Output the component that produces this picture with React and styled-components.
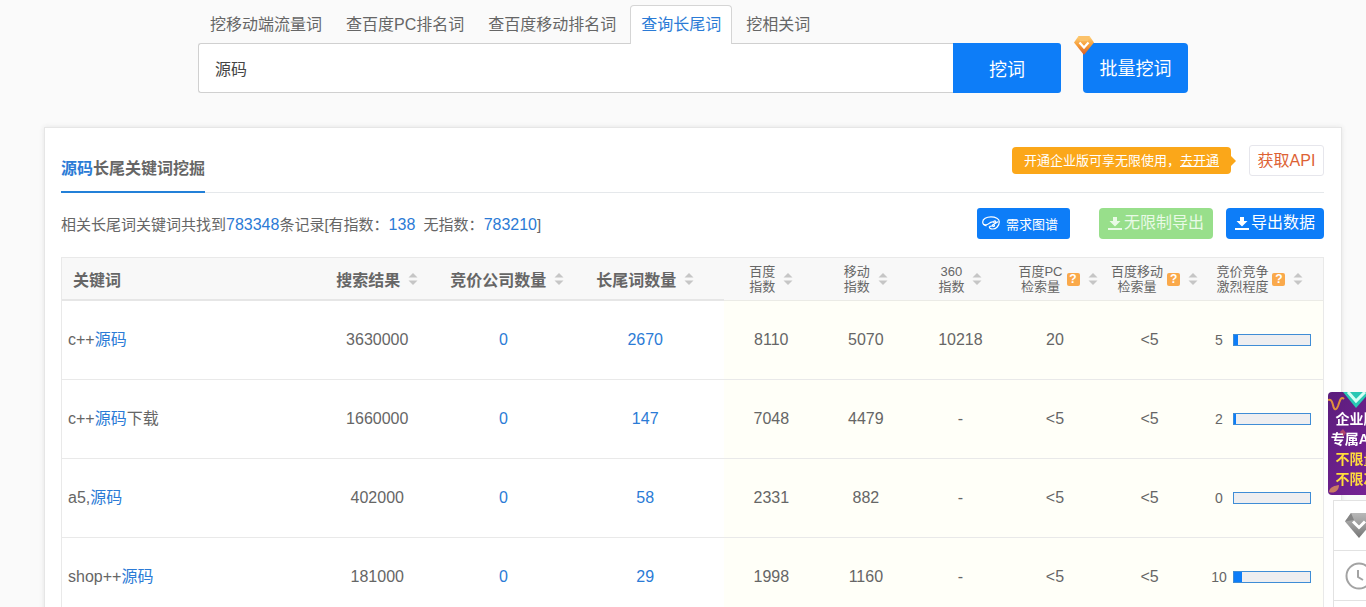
import * as React from "react";
import styled, { createGlobalStyle } from "styled-components";

const tabs = ["挖移动端流量词", "查百度PC排名词", "查百度移动排名词", "查询长尾词", "挖相关词"];

const counts = [
  { name: "搜索结果" },
  { name: "竞价公司数量", shift: 8 },
  { name: "长尾词数量" },
];

const metrics = [
  { lines: ["百度", "指数"] },
  { lines: ["移动", "指数"] },
  { lines: ["360", "指数"] },
  { lines: ["百度PC", "检索量"], help: true, shift: 6 },
  { lines: ["百度移动", "检索量"], help: true, shift: 10 },
  { lines: ["竞价竞争", "激烈程度"], help: true },
];

const rows = [
  { before: "c++", after: "", results: "3630000", companies: "0", tails: "2670", values: ["8110", "5070", "10218", "20", "<5"], level: 5 },
  { before: "c++", after: "下载", results: "1660000", companies: "0", tails: "147", values: ["7048", "4479", "-", "<5", "<5"], level: 2 },
  { before: "a5,", after: "", results: "402000", companies: "0", tails: "58", values: ["2331", "882", "-", "<5", "<5"], level: 0 },
  { before: "shop++", after: "", results: "181000", companies: "0", tails: "29", values: ["1998", "1160", "-", "<5", "<5"], level: 10 },
];

function DownloadIcon() {
  return (
    <svg width="14" height="15" viewBox="0 0 14 15" fill="currentColor" aria-hidden="true">
      <path d="M5 1h4v4h3.500L7 10.500 1.500 5H5z" />
      <path d="M0 12h14v2H0z" />
    </svg>
  );
}

function GraphIcon() {
  return (
    <svg width="18" height="14" viewBox="0 0 18 14" fill="none" stroke="currentColor" strokeWidth="1.2" aria-hidden="true">
      <path d="M4.500 9.800C2.200 9.300.7 7.800.7 5.900.7 3 4.400.8 9 .8s8.300 2 8.300 4.900c0 4.300-3.300 7.300-6.600 7.300-2.400 0-3.700-1.300-3.300-2.700" />
      <path d="M1.500 8.200c2 1.200 4 .6 5.300-.6 1.500-1.400 3.200-2.200 5-1.600M7.400 10.300c1.600.3 3-.5 4-1.700l5-3" />
      <circle cx="12.800" cy="6" r="1.100" />
      <circle cx="11.500" cy="9.500" r="1" />
    </svg>
  );
}

function SortIcon() {
  return (
    <svg width="10" height="14" viewBox="0 0 10 14" fill="#c6c6c6" aria-hidden="true">
      <path d="M5 1l4.500 4.500h-9z" />
      <path d="M5 13L.5 8.500h9z" />
    </svg>
  );
}

function GoldGem() {
  return (
    <svg width="20" height="19" viewBox="0 0 20 19" aria-hidden="true">
      <defs>
        <linearGradient id="gold" x1="0" y1="0" x2="0" y2="1">
          <stop offset="0" stopColor="#ffd27a" />
          <stop offset=".5" stopColor="#f59a36" />
          <stop offset="1" stopColor="#d95c26" />
        </linearGradient>
      </defs>
      <path d="M4.500 0h11L20 6.500 10 19 0 6.500z" fill="url(#gold)" />
      <path d="M4.500 0L6 5h8l1.500-5z" fill="#fbc26a" />
      <path d="M5.500 6.500L10 11.500l4.500-5" fill="none" stroke="#fff" strokeWidth="2.200" />
    </svg>
  );
}

function GrayGem() {
  return (
    <svg width="28" height="25" viewBox="0 0 28 25" aria-hidden="true">
      <defs>
        <linearGradient id="gray" x1="0" y1="0" x2="0" y2="1">
          <stop offset="0" stopColor="#b8b8b8" />
          <stop offset=".5" stopColor="#9a9a9a" />
          <stop offset="1" stopColor="#757575" />
        </linearGradient>
      </defs>
      <path d="M6 0h16l6 8.500L14 25 0 8.500z" fill="url(#gray)" />
      <path d="M0 8.500L6 0l3 7z" fill="#858585" />
      <path d="M8 8.500l6 6 6-6" fill="none" stroke="#fff" strokeWidth="3" />
    </svg>
  );
}

function ClockIcon() {
  return (
    <svg width="28" height="28" viewBox="0 0 28 28" fill="none" stroke="#a3a3a3" strokeWidth="2" aria-hidden="true">
      <circle cx="14" cy="14" r="12.500" />
      <path d="M13 8v7l5 3" />
    </svg>
  );
}

function PromoArt() {
  return (
    <Art viewBox="0 0 57 103" aria-hidden="true">
      <defs>
        <linearGradient id="promo" x1="0" y1="0" x2="1" y2="1">
          <stop offset="0" stopColor="#5b1d7c" />
          <stop offset="1" stopColor="#7b2399" />
        </linearGradient>
      </defs>
      <path d="M0 0h57v103H0z" fill="url(#promo)" />
      <path d="M0 8c3-1 4 1 5 5 1 5 3 6 5 1 2-6 3-10 6-7" fill="none" stroke="#e0913c" strokeWidth="2" />
      <path d="M15 0h27L28 16z" fill="#28c7b3" />
      <path d="M20 0l8 9 9-9" fill="none" stroke="#d2fff4" strokeWidth="3" />
      <path d="M1 100c1-6 6-6 10-7 0 6-5 9-10 7z" fill="#c97b63" />
      <path d="M12 40l3-3 3 4-3 4z" fill="#b1446d" />
    </Art>
  );
}

export default function App() {
  return (
    <Page>
      <GlobalStyle />
      <Search>
        <Tabs>
          {tabs.map((tab) => (
            <Tab key={tab} href="#" $active={tab === "查询长尾词"}>{tab}</Tab>
          ))}
        </Tabs>
        <SearchRow>
          <SearchInput aria-label="关键词" defaultValue="源码" />
          <SearchButton type="button">挖词</SearchButton>
          <BatchButton type="button">
            批量挖词
            <GemBadge><GoldGem /></GemBadge>
          </BatchButton>
        </SearchRow>
      </Search>

      <Card>
        <CardHead>
          <Title><Mark>源码</Mark>长尾关键词挖掘</Title>
          <HeadActions>
            <Notice>开通企业版可享无限使用，<NoticeLink href="#">去开通</NoticeLink></Notice>
            <ApiButton type="button">获取API</ApiButton>
          </HeadActions>
        </CardHead>
        <Summary>
          <SummaryText>
            相关长尾词关键词共找到<Count>783348</Count>条记录[有指数：<Count>138</Count>&nbsp; 无指数：<Count>783210</Count>]
          </SummaryText>
          <GraphButton type="button"><GraphIcon />需求图谱</GraphButton>
          <ExportGroup>
            <ExportButton type="button" $light><DownloadIcon />无限制导出</ExportButton>
            <ExportButton type="button"><DownloadIcon />导出数据</ExportButton>
          </ExportGroup>
        </Summary>
        <Table>
          <colgroup>
            <Col $width="20%" />
            <Col $width="10%" />
            <Col $width="10%" />
            <Col $width="12.5%" />
            {metrics.map((m, i) => <Col key={i} $width={i === 5 ? "10%" : "7.5%"} />)}
          </colgroup>
          <thead>
            <tr>
              <Th $first>关键词</Th>
              {counts.map((c) => (
                <Th key={c.name} $shift={c.shift}>
                  <HeadLabel>{c.name}<SortButton type="button" aria-label={c.name + "排序"}><SortIcon /></SortButton></HeadLabel>
                </Th>
              ))}
              {metrics.map((m) => (
                <MetricTh key={m.lines.join("")} $shift={m.shift}>
                  <HeadLabel>
                    <span>{m.lines[0]}<br />{m.lines[1]}</span>
                    {m.help && <Help>?</Help>}
                    <SortButton type="button" aria-label={m.lines.join("") + "排序"}><SortIcon /></SortButton>
                  </HeadLabel>
                </MetricTh>
              ))}
            </tr>
          </thead>
          <tbody>
            {rows.map((row) => (
              <tr key={row.before + row.after}>
                <Td $first>{row.before}<Mark>源码</Mark>{row.after}</Td>
                <Td>{row.results}</Td>
                <Td><CellLink href="#">{row.companies}</CellLink></Td>
                <Td><CellLink href="#">{row.tails}</CellLink></Td>
                {row.values.map((value, i) => <Td key={i} $metric>{value}</Td>)}
                <Td $metric>
                  <Level>
                    <LevelValue>{row.level}</LevelValue>
                    <Bar><BarFill style={{ width: row.level + "%" }} /></Bar>
                  </Level>
                </Td>
              </tr>
            ))}
          </tbody>
        </Table>
      </Card>

      <Side>
        <Promo href="#">
          <PromoArt />
          <PromoLine>企业版</PromoLine>
          <PromoLine>专属API</PromoLine>
          <PromoLine $gold>不限量</PromoLine>
          <PromoLine $gold>不限次</PromoLine>
        </Promo>
        <Tools>
          <Tool type="button" aria-label="会员"><GrayGem /></Tool>
          <Tool type="button" aria-label="历史"><ClockIcon /></Tool>
          <Tool type="button" aria-label="更多" />
        </Tools>
      </Side>
    </Page>
  );
}

const GlobalStyle = createGlobalStyle`
  * {
    box-sizing: border-box;
  }
  html {
    scrollbar-width: none;
  }
  body {
    margin: 0;
    background: #fafafa;
    color: #666;
    font-family: "Liberation Sans", "Noto Sans CJK SC", sans-serif;
    font-size: 16px;
  }
  button, input {
    font-family: inherit;
  }
  button {
    cursor: pointer;
    padding: 0;
    white-space: nowrap;
  }
  a {
    text-decoration: none;
  }
  svg {
    display: block;
    flex: none;
  }
`;

const Page = styled.div`
  padding: 5px 24px 0 44px;
`;

const Search = styled.div`
  max-width: 990px;
  margin: 0 auto;
`;

const Tabs = styled.nav`
  display: flex;
  height: 39px;
  margin-bottom: -1px;
`;

const Tab = styled.a`
  padding: 0 ${(p) => (p.$active ? "10px" : "11px")};
  margin: 0 ${(p) => (p.$active ? "2px" : "0")};
  line-height: 38px;
  color: ${(p) => (p.$active ? "#2b7bd6" : "#666")};
  background: ${(p) => (p.$active ? "#fff" : "none")};
  border: 1px solid ${(p) => (p.$active ? "#d5d5d5" : "transparent")};
  border-bottom: 0;
  border-radius: 4px 4px 0 0;
  white-space: nowrap;
  z-index: 1;
`;

const SearchRow = styled.div`
  display: flex;
  height: 50px;
`;

const SearchInput = styled.input`
  flex: 1;
  min-width: 0;
  padding: 0 16px;
  border: 1px solid #d0d0d0;
  border-right: 0;
  border-radius: 3px 0 0 3px;
  background: #fff;
  color: #444;
  font-size: 16px;
  outline: 0;
`;

const SearchButton = styled.button`
  width: 108px;
  border: 0;
  border-radius: 0 3px 3px 0;
  background: #0d7df8;
  color: #fff;
  font-size: 18px;
`;

const BatchButton = styled.button`
  position: relative;
  width: 105px;
  margin-left: 22px;
  padding-bottom: 2px;
  border: 0;
  border-radius: 4px;
  background: #0d7df8;
  color: #fff;
  font-size: 18px;
`;

const GemBadge = styled.span`
  position: absolute;
  top: -7px;
  left: -9px;
`;

const Card = styled.main`
  margin-top: 34px;
  padding: 0 17px 40px 16px;
  border: 1px solid #e6e6e6;
  background: #fff;
  box-shadow: 0 0 5px #e4e4e4;
`;

const CardHead = styled.div`
  display: flex;
  justify-content: space-between;
  height: 65px;
  border-bottom: 1px solid #e5e8eb;
`;

const Title = styled.h1`
  margin: 0 0 -1px;
  padding-top: 16px;
  border-bottom: 2px solid #2380d8;
  font-size: 16px;
  font-weight: 700;
  line-height: 49px;
`;

const Mark = styled.span`
  color: #2b7bd6;
`;

const HeadActions = styled.div`
  display: flex;
  align-items: center;
  gap: 18px;
`;

const Notice = styled.div`
  position: relative;
  padding: 0 12px;
  border-radius: 4px;
  background: #fba719;
  color: #fff;
  font-size: 13px;
  line-height: 27px;
  white-space: nowrap;
  &::after {
    content: "";
    position: absolute;
    left: 100%;
    top: 9px;
    border: 5px solid transparent;
    border-left-color: #fba719;
    border-right: 0;
  }
`;

const NoticeLink = styled.a`
  color: #fff;
  text-decoration: underline;
`;

const ApiButton = styled.button`
  width: 75px;
  height: 31px;
  padding-bottom: 2px;
  border: 1px solid #e6e6ec;
  border-radius: 3px;
  background: #fff;
  color: #dd6234;
  font-size: 16px;
`;

const Summary = styled.div`
  display: flex;
  align-items: center;
  height: 64px;
  padding-bottom: 4px;
`;

const SummaryText = styled.p`
  margin: 0 auto 0 0;
  font-size: 15px;
`;

const Count = styled.span`
  color: #2b7bd6;
  font-size: 16px;
`;

const GraphButton = styled.button`
  display: flex;
  align-items: center;
  gap: 6px;
  width: 93px;
  height: 31px;
  padding-left: 5px;
  border: 0;
  border-radius: 3px;
  background: #0d7df8;
  color: #fff;
  font-size: 13px;
`;

const ExportGroup = styled.div`
  display: flex;
  gap: 13px;
  margin-left: 29px;
`;

const ExportButton = styled.button`
  display: flex;
  align-items: center;
  gap: 2px;
  height: 31px;
  padding: 0 9px;
  border: 0;
  border-radius: 4px;
  background: ${(p) => (p.$light ? "#98df8b" : "#0d7df8")};
  color: ${(p) => (p.$light ? "#e9fae6" : "#fff")};
  font-size: 16px;
  line-height: 30px;
`;

const Table = styled.table`
  width: 100%;
  table-layout: fixed;
  border-collapse: separate;
  border-spacing: 0;
  border: 1px solid #e9e9e9;
  border-bottom: 0;
`;

const Col = styled.col`
  width: ${(p) => p.$width};
`;

const Th = styled.th`
  height: 43px;
  padding: 0 0 0 ${(p) => (p.$first ? 11 : p.$shift || 0)}px;
  background: #f8f8f8;
  border-bottom: 2px solid #e6e6e6;
  text-align: ${(p) => (p.$first ? "left" : "center")};
  white-space: nowrap;
`;

const MetricTh = styled.th`
  padding: 0 0 0 ${(p) => p.$shift || 0}px;
  background: #f8f8f8;
  border-bottom: 1px solid #ebebe6;
  font-size: 13px;
  font-weight: 400;
  line-height: 15px;
  white-space: nowrap;
`;

const HeadLabel = styled.div`
  display: flex;
  align-items: center;
  justify-content: center;
`;

const SortButton = styled.button`
  margin-left: 8px;
  border: 0;
  background: none;
`;

const Help = styled.span`
  flex: none;
  width: 13px;
  height: 13px;
  margin-left: 4px;
  border-radius: 2px;
  background: #faa94b;
  color: #fff;
  font-size: 12px;
  font-weight: 700;
  line-height: 13px;
  text-align: center;
`;

const Td = styled.td`
  height: 79px;
  padding: 0 0 0 ${(p) => (p.$first ? "6px" : "0")};
  border-bottom: 1px solid #e9e9e9;
  background: ${(p) => (p.$metric ? "#fffff8" : "#fff")};
  line-height: 24px;
  text-align: ${(p) => (p.$first ? "left" : "center")};
`;

const CellLink = styled.a`
  color: #2b7bd6;
`;

const Level = styled.div`
  display: flex;
  align-items: center;
  justify-content: flex-end;
  gap: 4px;
  padding-right: 12px;
`;

const LevelValue = styled.span`
  width: 20px;
  font-size: 14px;
`;

const Bar = styled.div`
  width: 78px;
  height: 12px;
  border: 1px solid #3f8dd6;
  background: #eeeef0;
`;

const BarFill = styled.div`
  height: 100%;
  background: #0d7df8;
`;

const Side = styled.aside`
  position: fixed;
  top: 392px;
  right: -19px;
  width: 57px;
`;

const Promo = styled.a`
  position: relative;
  display: block;
  height: 103px;
  padding-top: 17px;
  border-radius: 4px;
  overflow: hidden;
`;

const Art = styled.svg`
  position: absolute;
  inset: 0;
  width: 100%;
  height: 100%;
`;

const PromoLine = styled.span`
  position: relative;
  display: block;
  color: ${(p) => (p.$gold ? "#ffdc3c" : "#fff")};
  font-size: 14px;
  font-weight: 700;
  line-height: 20px;
  text-align: center;
  white-space: nowrap;
`;

const Tools = styled.div`
  margin: 5px 0 0 5px;
  border: 1px solid #e2e2e2;
  background: #fff;
`;

const Tool = styled.button`
  display: flex;
  align-items: center;
  width: 100%;
  height: 50px;
  padding-left: 11px;
  border: 0;
  border-bottom: 1px solid #e2e2e2;
  background: #fff;
`;
